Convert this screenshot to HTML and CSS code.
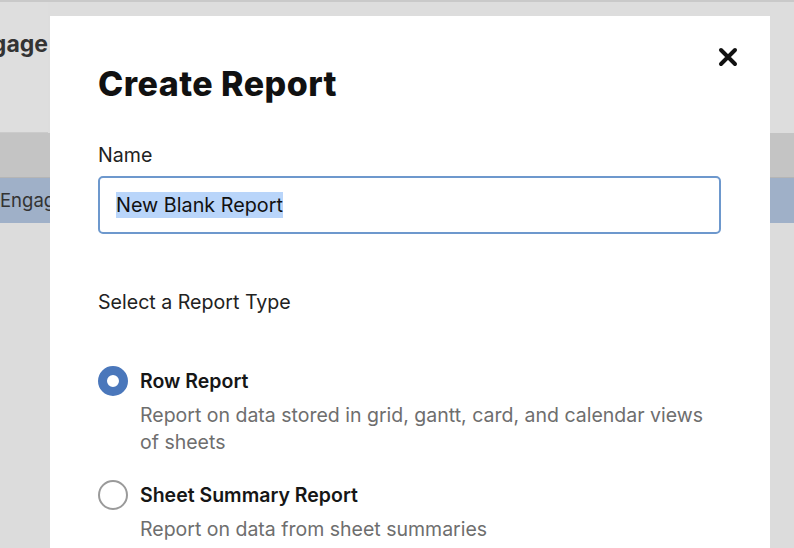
FILE: index.html
```html
<!DOCTYPE html>
<html>
<head>
<meta charset="utf-8">
<link rel="stylesheet" href="styles.css">
</head>
<body>
<div class="app">
  <div class="topline"></div>
  <div class="header"><span class="header-title">Engage</span></div>
  <div class="colhead"></div>
  <div class="row-selected"><span class="row-text">Engag</span></div>
  <div class="rest"></div>
</div>
<div class="modal">
  <button class="close" aria-label="Close">
    <svg width="20" height="20" viewBox="0 0 20 20"><path d="M3 3 L17 17 M17 3 L3 17" stroke="#111" stroke-width="4" stroke-linecap="round"/></svg>
  </button>
  <h1 class="title">Create Report</h1>
  <label class="label">Name</label>
  <div class="input"><span class="sel">New Blank Report</span></div>
  <div class="section-label">Select a Report Type</div>
  <div class="options">
    <div class="option">
      <span class="radio radio-on"></span>
      <div class="opt-body">
        <div class="opt-title">Row Report</div>
        <div class="opt-desc">Report on data stored in grid, gantt, card, and calendar views of sheets</div>
      </div>
    </div>
    <div class="option">
      <span class="radio"></span>
      <div class="opt-body">
        <div class="opt-title">Sheet Summary Report</div>
        <div class="opt-desc">Report on data from sheet summaries</div>
      </div>
    </div>
  </div>
</div>
</body>
</html>
```
FILE: styles.css
```css
html, body {
  margin: 0;
  padding: 0;
  width: 794px;
  height: 548px;
  overflow: hidden;
  background: #dddddd;
  font-family: Inter, "Noto Sans", sans-serif;
}
.app {
  display: flex;
  flex-direction: column;
  height: 548px;
}
.topline {
  height: 2px;
  background: #c9c9c9;
}
.header {
  height: 131px;
  background: #dedede;
  border-bottom: 1px solid #cbcbcb;
  box-sizing: border-box;
  display: flex;
  justify-content: flex-end;
  width: 48px;
  overflow: visible;
  padding-top: 28px;
}
.header-title {
  font-weight: 700;
  font-size: 23px;
  line-height: 28px;
  color: #333;
  white-space: nowrap;
}
.colhead {
  height: 44px;
  background: #c4c4c4;
  border-bottom: 1px solid #b5b5b5;
}
.row-selected {
  height: 45px;
  background: #9fb0c8;
  display: flex;
  align-items: center;
}
.row-text {
  font-size: 18.5px;
  color: #333;
  padding-bottom: 2px;
}
.rest {
  flex: 1;
  background: #dcdcdc;
}
.modal {
  position: absolute;
  left: 50px;
  top: 16px;
  width: 720px;
  height: 540px;
  background: #fff;
  box-sizing: border-box;
  padding: 48px 48px 0 48px;
  color: #161616;
}
.close {
  position: absolute;
  right: 32px;
  top: 31px;
  width: 20px;
  height: 20px;
  padding: 0;
  border: 0;
  background: none;
  display: flex;
}
.title {
  margin: 0;
  font-size: 34px;
  font-weight: 800;
  letter-spacing: 0.45px;
  line-height: 40px;
  color: #111;
}
.label {
  display: block;
  margin-top: 39px;
  font-size: 19.6px;
  line-height: 24px;
  color: #222;
}
.input {
  margin-top: 9px;
  width: 623px;
  height: 58px;
  box-sizing: border-box;
  border: 2px solid #6d98cd;
  border-radius: 5px;
  padding: 0 16px;
  display: flex;
  align-items: center;
  font-size: 19.8px;
  color: #111;
}
.sel {
  background: #b9d5fa;
  line-height: 26px;
}
.section-label {
  margin-top: 56px;
  font-size: 19.6px;
  line-height: 24px;
  color: #222;
}
.options {
  margin-top: 52px;
  display: flex;
  flex-direction: column;
  gap: 24px;
}
.option {
  display: flex;
  gap: 12px;
}
.radio {
  width: 30px;
  height: 30px;
  box-sizing: border-box;
  border-radius: 50%;
  border: 2px solid #9a9a9a;
  flex-shrink: 0;
}
.radio-on {
  border: 9px solid #4a77bb;
  background: #fff;
}
.opt-body {
  display: flex;
  flex-direction: column;
  padding-top: 2px;
}
.opt-title {
  font-size: 19.5px;
  font-weight: 600;
  line-height: 26px;
  color: #161616;
}
.opt-desc {
  margin-top: 8px;
  font-size: 19.5px;
  line-height: 27px;
  color: #6e6e6e;
  width: 580px;
}
```
